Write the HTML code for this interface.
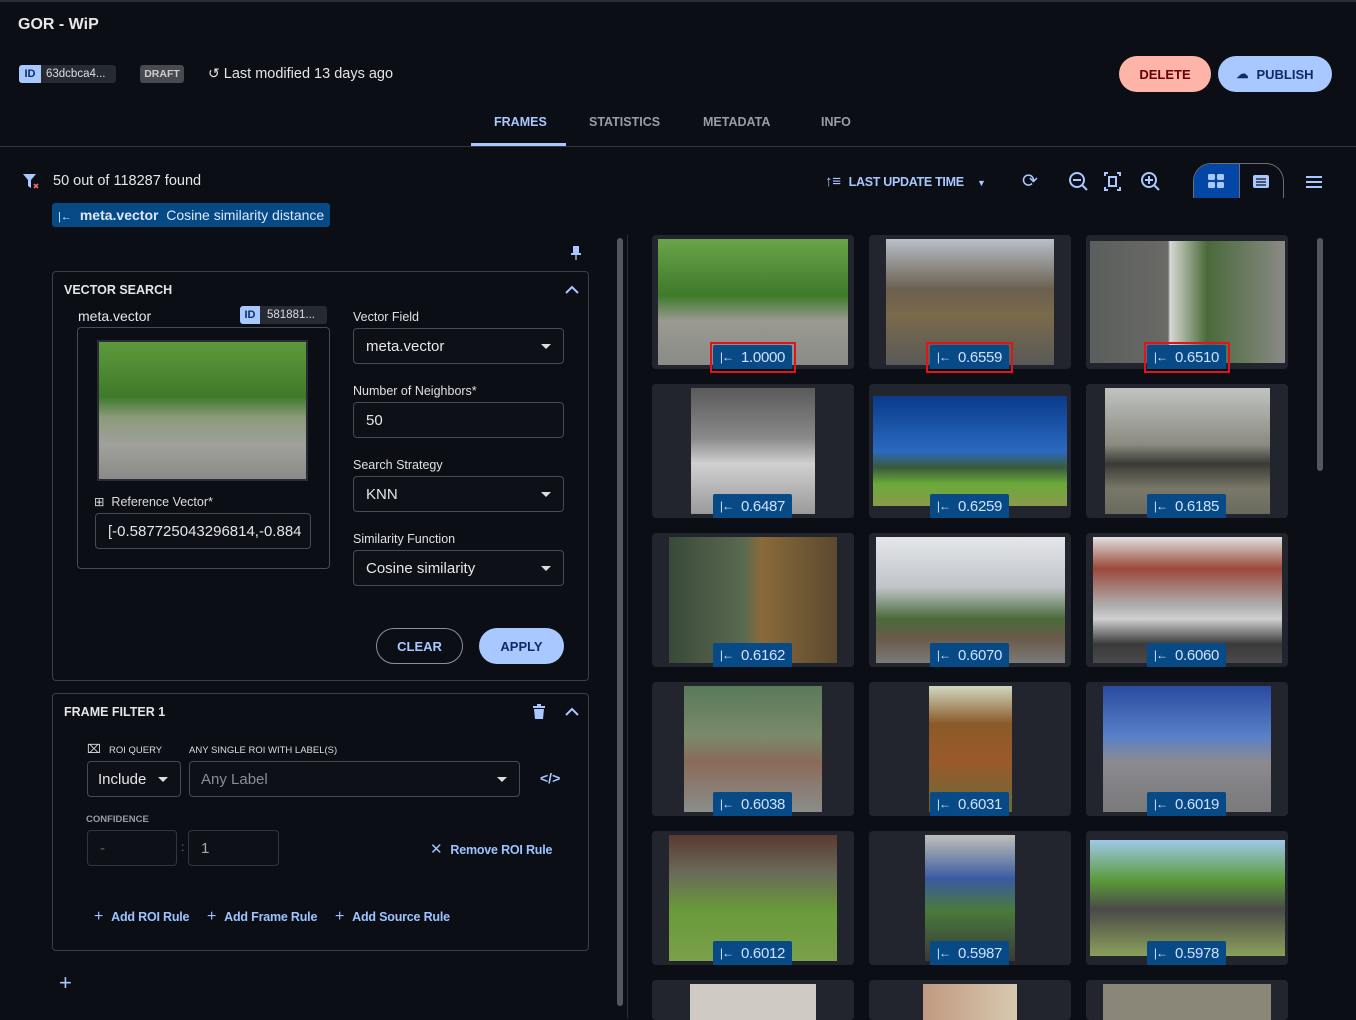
<!DOCTYPE html>
<html><head><meta charset="utf-8">
<style>
*{box-sizing:border-box;margin:0;padding:0}
body{width:1356px;height:1018px;overflow:hidden;background:#0b0e15;font-family:"Liberation Sans",sans-serif;color:#e4e6ea;position:relative}
.a{position:absolute}
.t{white-space:nowrap}
.btn{position:absolute;border-radius:18px;font-size:13px;font-weight:bold;display:flex;align-items:center;justify-content:center}
.box{position:absolute;border:1px solid #3b3f47;border-radius:4px}
.inp{position:absolute;border:1px solid #474b53;border-radius:4px;background:#0d1017;font-size:15px;color:#e6e6e6;display:flex;align-items:center;padding-left:12px}
.lbl{position:absolute;font-size:12.5px;color:#e0e0e0}
.car{position:absolute;right:12px;top:50%;margin-top:-2px;width:0;height:0;border-left:5px solid transparent;border-right:5px solid transparent;border-top:5px solid #ddd}
.card{position:absolute;width:202px;height:134px;background:#22252d;border-radius:4px;overflow:hidden}
.img{position:absolute}
.bd{position:absolute;height:24px;width:79px;background:#074a86;color:#cfe0ff;font-size:15px;display:flex;align-items:center;justify-content:center;border-radius:2px 2px 0 0;letter-spacing:-0.3px}
.bd span{font-size:12px;margin-right:8px;letter-spacing:-1px}
.red{position:absolute;border:2px solid #e3121b}
.lk{color:#9cc3ff;font-size:12.5px;font-weight:bold;letter-spacing:-0.2px}
</style></head><body>
<div class="a" style="left:0;top:0;width:1356px;height:2px;background:#2a2d34"></div>
<div class="a t" style="left:18px;top:16px;font-size:16px;font-weight:bold;color:#e8e8e8">GOR - WiP</div>
<div class="a" style="left:19px;top:65px;width:97px;height:18px;background:#262a33;border-radius:3px;overflow:hidden">
 <div class="a" style="left:0;top:0;width:22px;height:18px;background:#a8c8ff;color:#0b2d66;font-size:11px;font-weight:bold;text-align:center;line-height:18px">ID</div>
 <div class="a t" style="left:27px;top:0;line-height:18px;font-size:11.5px;color:#ddd">63dcbca4...</div></div>
<div class="a" style="left:140px;top:65px;width:44px;height:18px;background:#474a51;border-radius:3px;font-size:10.5px;font-weight:bold;color:#ccc;text-align:center;line-height:18px">DRAFT</div>
<div class="a t" style="left:208px;top:65px;font-size:14.5px;color:#e4e4e4"><span style="font-size:14px">↺</span> Last modified 13 days ago</div>
<div class="btn" style="left:1119px;top:56px;width:92px;height:36px;background:#ffb4a8;color:#690005">DELETE</div>
<div class="btn" style="left:1218px;top:56px;width:114px;height:36px;background:#a8c8ff;color:#0b2d66"><span style="font-size:12px;margin-right:8px">☁</span>PUBLISH</div>
<div class="a t" style="left:494px;top:115px;font-size:12.5px;font-weight:bold;color:#a8c8ff">FRAMES</div>
<div class="a t" style="left:589px;top:115px;font-size:12.5px;font-weight:bold;color:#9a9da3">STATISTICS</div>
<div class="a t" style="left:703px;top:115px;font-size:12.5px;font-weight:bold;color:#9a9da3">METADATA</div>
<div class="a t" style="left:821px;top:115px;font-size:12.5px;font-weight:bold;color:#9a9da3">INFO</div>
<div class="a" style="left:471px;top:143px;width:95px;height:3px;background:#a8c8ff"></div>
<div class="a" style="left:0;top:146px;width:1356px;height:1px;background:#34373e"></div>
<svg class="a" style="left:22px;top:173px" width="18" height="17"><path d="M1 1h13l-5 6v8l-3-2V7z" fill="#a8c8ff"/><path d="M12 11l4 4M16 11l-4 4" stroke="#f26a5e" stroke-width="1.6"/></svg>
<div class="a t" style="left:53px;top:173px;font-size:14.5px">50 out of 118287 found</div>
<div class="a t" style="left:52px;top:203px;width:278px;height:24px;background:#064a85;border-radius:3px;font-size:14px;color:#dde8ff;line-height:24px;padding-left:6px"><span style="font-size:11px;margin-right:8px">|←</span><b>meta.vector</b>&nbsp; Cosine similarity distance</div>
<div class="a t" style="left:825px;top:173px;font-size:12.5px;font-weight:bold;color:#a8c8ff;letter-spacing:-0.3px"><span style="font-size:15px;margin-right:8px">↑≡</span>LAST UPDATE TIME <span style="font-size:9px;margin-left:10px">▼</span></div>
<div class="a" style="left:1022px;top:170px;font-size:19px;color:#a8c8ff">⟳</div>
<svg class="a" style="left:1068px;top:171px" width="100" height="22" fill="none" stroke="#a8c8ff" stroke-width="2"><circle cx="9" cy="9" r="7"/><path d="M14 14l5 5M5 9h8"/><path d="M40 2h-3v3M49 2h3v3M40 19h-3v-3M49 19h3v-3"/><rect x="41" y="6" width="7" height="9"/><circle cx="81" cy="9" r="7"/><path d="M86 14l5 5M77 9h8M81 5v8"/></svg>
<div class="a" style="left:1193px;top:163px;width:91px;height:35px;border:1px solid #6a6d74;border-radius:18px 18px 0 0;border-bottom:none;overflow:hidden">
 <div class="a" style="left:0;top:0;width:45px;height:35px;background:#0446a5"></div>
 <div class="a" style="left:45px;top:0;width:1px;height:35px;background:#6a6d74"></div>
 <svg class="a" style="left:14px;top:10px" width="18" height="16" fill="#a8c8ff"><rect x="0" y="0" width="7" height="6" rx="1.5"/><rect x="9" y="0" width="7" height="6" rx="1.5"/><rect x="0" y="8" width="7" height="6" rx="1.5"/><rect x="9" y="8" width="7" height="6" rx="1.5"/></svg>
 <svg class="a" style="left:58px;top:10px" width="20" height="16"><rect x="1" y="1" width="16" height="13" rx="2" fill="#a8c8ff"/><path d="M4 5h10M4 8h10M4 11h10" stroke="#0b0e15" stroke-width="1.3"/></svg>
</div>
<svg class="a" style="left:1305px;top:175px" width="18" height="14" stroke="#a8c8ff" stroke-width="2"><path d="M1 2h16M1 7h16M1 12h16"/></svg>

<!-- left panel -->
<svg class="a" style="left:571px;top:245px" width="10" height="16"><rect x="2" y="1" width="6" height="8" fill="#a8c8ff"/><rect x="0" y="8" width="10" height="2" fill="#a8c8ff"/><path d="M5 10v5" stroke="#a8c8ff" stroke-width="1.3"/></svg>
<div class="a" style="left:617px;top:238px;width:6px;height:768px;background:#54575e;border-radius:3px"></div>
<div class="a" style="left:627px;top:235px;width:1px;height:783px;background:#2c2f36"></div>

<div class="box" style="left:52px;top:271px;width:537px;height:410px"></div>
<div class="a t" style="left:64px;top:283px;font-size:12.5px;font-weight:bold">VECTOR SEARCH</div>
<svg class="a" style="left:565px;top:285px" width="14" height="10" fill="none" stroke="#a8c8ff" stroke-width="2"><path d="M1 8l6-6 6 6"/></svg>
<div class="a t" style="left:78px;top:308px;font-size:14px">meta.vector</div>
<div class="a" style="left:240px;top:306px;width:87px;height:18px;background:#262a33;border-radius:3px;overflow:hidden">
 <div class="a" style="left:0;top:0;width:20px;height:18px;background:#a8c8ff;color:#0b2d66;font-size:11px;font-weight:bold;text-align:center;line-height:18px">ID</div>
 <div class="a t" style="left:27px;top:0;line-height:18px;font-size:11.5px;color:#ddd">581881...</div></div>
<div class="box" style="left:77px;top:327px;width:253px;height:242px;border-color:#474b53"></div>
<div class="a" style="left:97px;top:340px;width:211px;height:141px;border:2px solid #2a2d35;background:linear-gradient(180deg,#5d9a3c 0%,#3f7a2a 40%,#8c9a7a 55%,#a0a09c 75%,#8a8a88 100%)"></div>
<div class="a t" style="left:94px;top:494px;font-size:12.5px;color:#ddd">⊞&nbsp; Reference Vector*</div>
<div class="inp" style="left:95px;top:513px;width:216px;height:36px;overflow:hidden">[-0.587725043296814,-0.884</div>
<div class="lbl" style="left:353px;top:310px">Vector Field</div>
<div class="inp" style="left:353px;top:328px;width:211px;height:36px">meta.vector<div class="car"></div></div>
<div class="lbl" style="left:353px;top:384px">Number of Neighbors*</div>
<div class="inp" style="left:353px;top:402px;width:211px;height:36px">50</div>
<div class="lbl" style="left:353px;top:458px">Search Strategy</div>
<div class="inp" style="left:353px;top:476px;width:211px;height:36px">KNN<div class="car"></div></div>
<div class="lbl" style="left:353px;top:532px">Similarity Function</div>
<div class="inp" style="left:353px;top:550px;width:211px;height:36px">Cosine similarity<div class="car"></div></div>
<div class="btn" style="left:376px;top:628px;width:87px;height:36px;border:1px solid #8d9097;color:#a8c8ff">CLEAR</div>
<div class="btn" style="left:479px;top:628px;width:85px;height:36px;background:#a8c8ff;color:#0b2d66">APPLY</div>

<div class="box" style="left:52px;top:693px;width:537px;height:258px"></div>
<div class="a t" style="left:64px;top:705px;font-size:12.5px;font-weight:bold">FRAME FILTER 1</div>
<svg class="a" style="left:533px;top:704px" width="12" height="15" fill="#a8c8ff"><rect x="0" y="2" width="12" height="2"/><rect x="4" y="0" width="4" height="2"/><path d="M1 5h10l-1 10H2z"/></svg>
<svg class="a" style="left:565px;top:707px" width="14" height="10" fill="none" stroke="#a8c8ff" stroke-width="2"><path d="M1 8l6-6 6 6"/></svg>
<div class="a t" style="left:87px;top:742px;font-size:12px;color:#ddd">⌧</div>
<div class="a t" style="left:109px;top:745px;font-size:9.5px;color:#ddd">ROI QUERY</div>
<div class="a t" style="left:189px;top:745px;font-size:9.5px;color:#ddd">ANY SINGLE ROI WITH LABEL(S)</div>
<div class="inp" style="left:87px;top:761px;width:94px;height:36px;padding-left:10px">Include<div class="car"></div></div>
<div class="inp" style="left:189px;top:761px;width:331px;height:36px;color:#8a8d93;padding-left:11px">Any Label<div class="car"></div></div>
<div class="a t" style="left:540px;top:770px;font-size:14px;font-weight:bold;color:#a8c8ff">&lt;/&gt;</div>
<div class="a t" style="left:86px;top:814px;font-size:9.5px;color:#9a9da3;font-weight:bold">CONFIDENCE</div>
<div class="inp" style="left:87px;top:830px;width:90px;height:36px;color:#666;border-color:#33363d">-</div>
<div class="a" style="left:181px;top:840px;color:#777;font-size:12px">:</div>
<div class="inp" style="left:188px;top:830px;width:91px;height:36px;color:#aaa;border-color:#33363d">1</div>
<div class="a t lk" style="left:430px;top:840px"><span style="font-size:15px;margin-right:8px;font-weight:normal">✕</span>Remove ROI Rule</div>
<div class="a t lk" style="left:94px;top:908px"><span style="font-size:16px;margin-right:8px;font-weight:normal">+</span>Add ROI Rule</div>
<div class="a t lk" style="left:207px;top:908px"><span style="font-size:16px;margin-right:8px;font-weight:normal">+</span>Add Frame Rule</div>
<div class="a t lk" style="left:335px;top:908px"><span style="font-size:16px;margin-right:8px;font-weight:normal">+</span>Add Source Rule</div>
<div class="a" style="left:59px;top:970px;font-size:22px;color:#a8c8ff">+</div>

<div class="a" style="left:1317px;top:238px;width:6px;height:233px;background:#54575e;border-radius:3px"></div>

<!-- grid -->
<div class="card" style="left:652px;top:235px"><div class="img" style="left:6px;top:4px;width:190px;height:126px;background:linear-gradient(180deg,#6aa44a 0%,#3f7a2a 45%,#9a9a90 65%,#8a8a88 100%)"></div><div class="bd" style="left:61px;top:110px"><span>|←</span>1.0000</div></div>
<div class="red" style="left:710px;top:342px;width:86px;height:31px"></div>
<div class="card" style="left:869px;top:235px"><div class="img" style="left:17px;top:4px;width:168px;height:126px;background:linear-gradient(180deg,#b8c0c8 0%,#6a6050 40%,#7a6a4a 60%,#5a5a58 100%)"></div><div class="bd" style="left:61px;top:110px"><span>|←</span>0.6559</div></div>
<div class="red" style="left:926px;top:342px;width:87px;height:31px"></div>
<div class="card" style="left:1086px;top:235px"><div class="img" style="left:4px;top:6px;width:195px;height:122px;background:linear-gradient(90deg,#5a5e5c 0%,#6a6a66 40%,#d8d8d4 41%,#4a6a3a 60%,#8a8a86 100%)"></div><div class="bd" style="left:61px;top:110px"><span>|←</span>0.6510</div></div>
<div class="red" style="left:1144px;top:342px;width:86px;height:31px"></div>

<div class="card" style="left:652px;top:384px"><div class="img" style="left:39px;top:4px;width:124px;height:126px;background:linear-gradient(180deg,#5a5a5a 0%,#8a8a8a 40%,#d0d0d0 60%,#9a9a9a 100%)"></div><div class="bd" style="left:61px;top:110px"><span>|←</span>0.6487</div></div>
<div class="card" style="left:869px;top:384px"><div class="img" style="left:4px;top:12px;width:194px;height:110px;background:linear-gradient(180deg,#0a3a8a 0%,#2a6ac0 50%,#3a5a3a 65%,#6aaa3a 80%,#8a9a4a 100%)"></div><div class="bd" style="left:61px;top:110px"><span>|←</span>0.6259</div></div>
<div class="card" style="left:1086px;top:384px"><div class="img" style="left:19px;top:4px;width:165px;height:126px;background:linear-gradient(180deg,#c0c4c0 0%,#8a8a80 45%,#3a3a36 60%,#7a7868 80%,#6a6a60 100%)"></div><div class="bd" style="left:61px;top:110px"><span>|←</span>0.6185</div></div>

<div class="card" style="left:652px;top:533px"><div class="img" style="left:17px;top:4px;width:168px;height:126px;background:linear-gradient(90deg,#3a4a3a 0%,#5a6a50 45%,#8a6a3a 55%,#5a4a30 100%)"></div><div class="bd" style="left:61px;top:110px"><span>|←</span>0.6162</div></div>
<div class="card" style="left:869px;top:533px"><div class="img" style="left:7px;top:4px;width:189px;height:126px;background:linear-gradient(180deg,#e4e6ea 0%,#c0c4c8 40%,#4a6a3a 65%,#6a5a4a 80%,#7a7a78 100%)"></div><div class="bd" style="left:61px;top:110px"><span>|←</span>0.6070</div></div>
<div class="card" style="left:1086px;top:533px"><div class="img" style="left:7px;top:4px;width:189px;height:126px;background:linear-gradient(180deg,#e0e0e0 0%,#9a4a3a 25%,#b0b0b0 55%,#d0d0d0 65%,#3a3a3a 85%,#4a4a4a 100%)"></div><div class="bd" style="left:61px;top:110px"><span>|←</span>0.6060</div></div>

<div class="card" style="left:652px;top:682px"><div class="img" style="left:32px;top:4px;width:138px;height:126px;background:linear-gradient(180deg,#5a7a5a 0%,#7a8a6a 40%,#8a6a5a 60%,#8a8e8a 100%)"></div><div class="bd" style="left:61px;top:110px"><span>|←</span>0.6038</div></div>
<div class="card" style="left:869px;top:682px"><div class="img" style="left:60px;top:4px;width:83px;height:126px;background:linear-gradient(180deg,#d0d8c0 0%,#8a5a2a 30%,#9a5a2a 60%,#6a6a3a 100%)"></div><div class="bd" style="left:61px;top:110px"><span>|←</span>0.6031</div></div>
<div class="card" style="left:1086px;top:682px"><div class="img" style="left:17px;top:4px;width:168px;height:126px;background:linear-gradient(180deg,#2a4aa0 0%,#5a80c8 40%,#8a8a90 60%,#7a7a7a 100%)"></div><div class="bd" style="left:61px;top:110px"><span>|←</span>0.6019</div></div>

<div class="card" style="left:652px;top:831px"><div class="img" style="left:17px;top:4px;width:168px;height:126px;background:linear-gradient(180deg,#5a3a30 0%,#6a6a5a 30%,#6a9a3a 60%,#7aa04a 100%)"></div><div class="bd" style="left:61px;top:110px"><span>|←</span>0.6012</div></div>
<div class="card" style="left:869px;top:831px"><div class="img" style="left:56px;top:4px;width:90px;height:126px;background:linear-gradient(180deg,#c0c0b8 0%,#3a5aa0 35%,#4a7a3a 60%,#3a3a3a 100%)"></div><div class="bd" style="left:61px;top:110px"><span>|←</span>0.5987</div></div>
<div class="card" style="left:1086px;top:831px"><div class="img" style="left:4px;top:9px;width:195px;height:116px;background:linear-gradient(180deg,#a0c8e8 0%,#5a9a3a 35%,#4a4a48 60%,#8aa05a 100%)"></div><div class="bd" style="left:61px;top:110px"><span>|←</span>0.5978</div></div>

<div class="card" style="left:652px;top:980px;height:40px"><div class="img" style="left:38px;top:4px;width:126px;height:40px;background:#cfcac4"></div></div>
<div class="card" style="left:869px;top:980px;height:40px"><div class="img" style="left:54px;top:4px;width:94px;height:40px;background:linear-gradient(90deg,#c09a80,#d8c8b0)"></div></div>
<div class="card" style="left:1086px;top:980px;height:40px"><div class="img" style="left:17px;top:4px;width:168px;height:40px;background:#8a8678"></div></div>
</body></html>
